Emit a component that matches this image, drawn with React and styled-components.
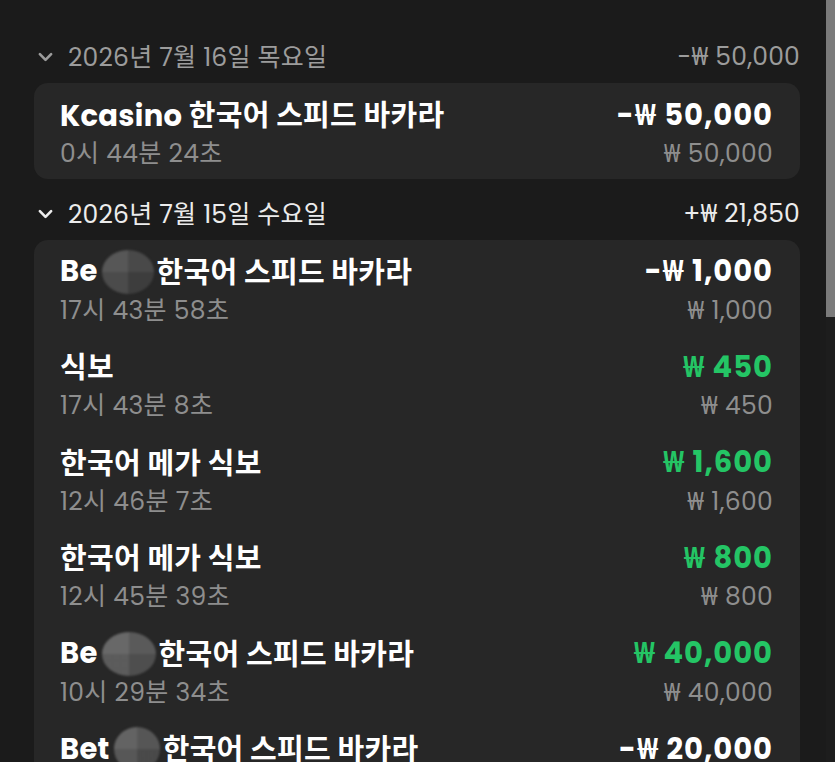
import React from 'react';
import styled, { createGlobalStyle } from 'styled-components';

const sections = [
  {
    date: '2026년 7월 16일 목요일',
    total: '-₩ 50,000',
    dim: true,
    items: [
      { name: 'Kcasino 한국어 스피드 바카라', time: '0시 44분 24초', amount: '-₩ 50,000', bet: '₩ 50,000' },
    ],
  },
  {
    date: '2026년 7월 15일 수요일',
    total: '+₩ 21,850',
    items: [
      { prefix: 'Be', mask: { w: 52, shade: '#474747' }, name: '한국어 스피드 바카라', time: '17시 43분 58초', amount: '-₩ 1,000', bet: '₩ 1,000' },
      { name: '식보', time: '17시 43분 8초', amount: '₩ 450', bet: '₩ 450', win: true },
      { name: '한국어 메가 식보', time: '12시 46분 7초', amount: '₩ 1,600', bet: '₩ 1,600', win: true },
      { name: '한국어 메가 식보', time: '12시 45분 39초', amount: '₩ 800', bet: '₩ 800', win: true },
      { prefix: 'Be', mask: { w: 54, shade: '#5a5a5a' }, name: '한국어 스피드 바카라', time: '10시 29분 34초', amount: '₩ 40,000', bet: '₩ 40,000', win: true },
      { prefix: 'Bet', mask: { w: 46, shade: '#555555' }, name: '한국어 스피드 바카라', time: '10시 28분 51초', amount: '-₩ 20,000', bet: '₩ 20,000' },
    ],
  },
];

const App = () => (
  <>
    <GlobalStyle />
    <Screen>
      <List>
        {sections.map((s) => (
          <Section key={s.date}>
            <DayHeader $dim={s.dim}>
              <DayLabel>
                <Chevron viewBox="0 0 16 10">
                  <path d="M2 2 L8 8 L14 2" />
                </Chevron>
                {s.date}
              </DayLabel>
              <span>{s.total}</span>
            </DayHeader>
            <Card>
              {s.items.map((it, i) => (
                <Row key={i}>
                  <Col>
                    <Title>
                      {it.prefix}
                      {it.mask && <Mask $w={it.mask.w} $shade={it.mask.shade} />}
                      {it.name}
                    </Title>
                    <Sub>{it.time}</Sub>
                  </Col>
                  <Col $right>
                    <Amount $win={it.win}>{it.amount}</Amount>
                    <Sub>{it.bet}</Sub>
                  </Col>
                </Row>
              ))}
            </Card>
          </Section>
        ))}
      </List>
      <Rail>
        <Thumb />
      </Rail>
    </Screen>
  </>
);

export default App;

const GlobalStyle = createGlobalStyle`
  html, body {
    margin: 0;
    padding: 0;
    background: #1b1b1b;
    overflow: hidden;
  }
  body {
    font-family: "Poppins", "Noto Sans", "Noto Sans CJK KR", sans-serif;
  }
`;

const Screen = styled.div`
  display: flex;
  height: 100vh;
  overflow: hidden;
  background: #1b1b1b;
`;

const List = styled.div`
  flex: 1;
  min-width: 0;
  display: flex;
  flex-direction: column;
  gap: 16px;
  padding: 38px 26px 0 34px;
`;

/* scroll indicator on the right edge */
const Rail = styled.div`
  width: 9px;
  flex-shrink: 0;
  background: #1d1d1d;
`;

const Thumb = styled.div`
  height: 317px;
  background: #7b7b7b;
`;

const Section = styled.section`
  display: flex;
  flex-direction: column;
  gap: 7px;
`;

const DayHeader = styled.div`
  display: flex;
  justify-content: space-between;
  align-items: center;
  height: 38px;
  padding-left: 4px;
  font-size: 25px;
  letter-spacing: 0.2px;
  color: ${(p) => (p.$dim ? '#9c9c9c' : '#ececec')};
`;

const DayLabel = styled.div`
  display: flex;
  align-items: center;
  gap: 15px;
`;

const Chevron = styled.svg`
  width: 15px;
  height: 10px;
  fill: none;
  stroke: currentColor;
  stroke-width: 2.8;
  stroke-linecap: round;
  stroke-linejoin: round;
`;

const Card = styled.div`
  background: #272727;
  border-radius: 14px;
  padding: 0 27px 0 26px;
  overflow: hidden;
`;

const Row = styled.div`
  display: flex;
  justify-content: space-between;
  padding: 14px 0 4.5px;
`;

const Col = styled.div`
  display: flex;
  flex-direction: column;
  align-items: ${(p) => (p.$right ? 'flex-end' : 'flex-start')};
`;

const Title = styled.div`
  display: flex;
  align-items: center;
  height: 36px;
  font-size: 29px;
  font-weight: 700;
  letter-spacing: 0.3px;
  color: #ffffff;
  white-space: nowrap;
`;

const Amount = styled(Title)`
  letter-spacing: 1px;
  color: ${(p) => (p.$win ? '#24c565' : '#ffffff')};
`;

/* pixelated blur patch over part of the name */
const Mask = styled.span`
  display: inline-block;
  width: ${(p) => p.$w}px;
  height: 44px;
  margin: 0 3px 0 4px;
  border-radius: 50%;
  background:
    linear-gradient(90deg, rgba(255, 255, 255, 0.05) 50%, rgba(0, 0, 0, 0.06) 50%),
    linear-gradient(180deg, rgba(255, 255, 255, 0.04) 50%, rgba(0, 0, 0, 0.08) 50%),
    ${(p) => p.$shade};
  filter: blur(1.2px);
`;

const Sub = styled.div`
  height: 41px;
  line-height: 42px;
  font-size: 25px;
  letter-spacing: 0.3px;
  color: #8e8e8e;
  white-space: nowrap;
`;
